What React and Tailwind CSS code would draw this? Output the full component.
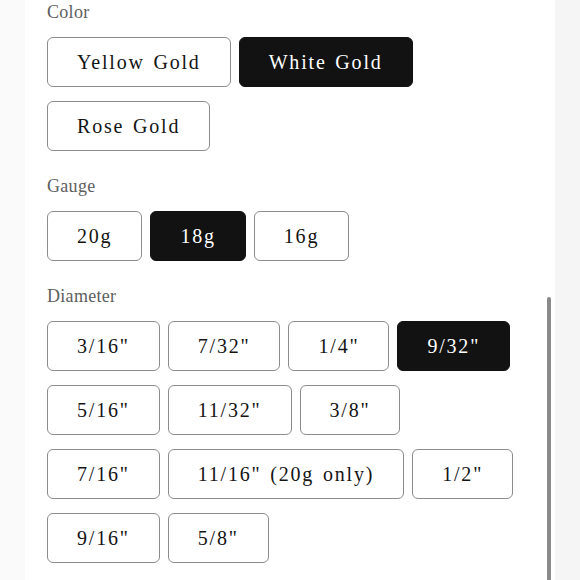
import React from "react";

const serif = { fontFamily: '"Liberation Serif", "DejaVu Serif", serif' };

const groups = [
  {
    label: "Color",
    selected: "White Gold",
    rows: [["Yellow Gold", "White Gold"], ["Rose Gold"]],
  },
  {
    label: "Gauge",
    selected: "18g",
    rows: [["20g", "18g", "16g"]],
  },
  {
    label: "Diameter",
    selected: '9/32"',
    rows: [
      ['3/16"', '7/32"', '1/4"', '9/32"'],
      ['5/16"', '11/32"', '3/8"'],
      ['7/16"', '11/16" (20g only)', '1/2"'],
      ['9/16"', '5/8"'],
    ],
  },
];

const OptionButton = ({ text, active }) => (
  <button
    className={`h-[50px] px-[29px] rounded-[6px] border text-[20px] tracking-[1.8px] [word-spacing:2px] leading-none flex items-center justify-center whitespace-nowrap ${
      active
        ? "bg-[#121212] border-[#121212] text-white"
        : "bg-white border-[#8c8c8c] text-[#141414]"
    }`}
  >
    {text}
  </button>
);

export default function App() {
  return (
    <div className="flex w-[580px] h-[580px] overflow-hidden bg-white" style={serif}>
      {/* left gutter */}
      <div className="w-[25px] shrink-0 bg-[#fafafa]" />

      {/* panel */}
      <div className="relative flex-1 bg-white pl-[22px]">
        <div className="flex flex-col gap-[23px]">
          {groups.map((group) => (
            <div key={group.label}>
              <p className="text-[18px] leading-[24px] tracking-[0.3px] text-[#5e5e5e] mb-[13px]">
                {group.label}
              </p>
              <div className="flex flex-col gap-[14px]">
                {group.rows.map((row, i) => (
                  <div key={i} className="flex gap-[8px]">
                    {row.map((opt) => (
                      <OptionButton key={opt} text={opt} active={opt === group.selected} />
                    ))}
                  </div>
                ))}
              </div>
            </div>
          ))}
        </div>

        {/* scrollbar */}
        <div className="absolute right-[4px] top-[297px] bottom-0 w-[4px] rounded-t-full bg-[#8a8a8a]" />
      </div>

      {/* right gutter */}
      <div className="w-[25px] shrink-0 bg-[#f5f5f5]" />
    </div>
  );
}
